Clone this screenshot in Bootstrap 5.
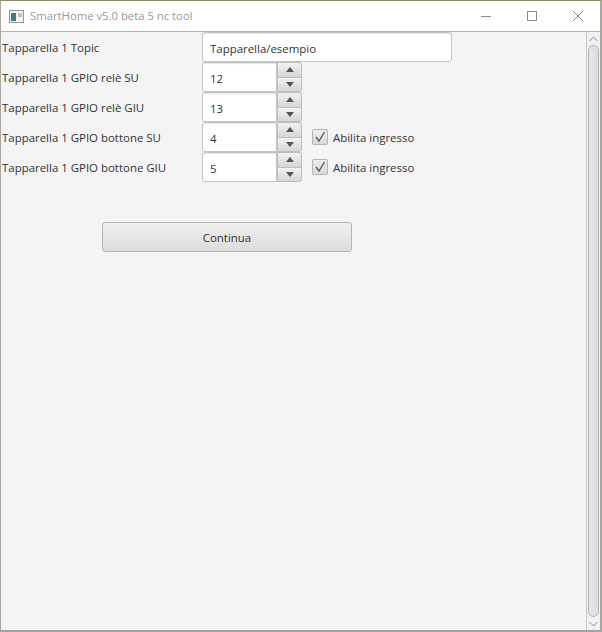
<!DOCTYPE html>
<html lang="it">
<head>
<meta charset="utf-8">
<title>SmartHome v5.0 beta 5 nc tool</title>
<link href="https://cdn.jsdelivr.net/npm/bootstrap@5.3.0/dist/css/bootstrap.min.css" rel="stylesheet">
<style>
html,body{height:100%;margin:0;background:#f4f4f4;}
body{font-family:"Open Sans","Noto Sans","Liberation Sans",sans-serif;font-size:11.45px;color:#333;overflow:hidden;}
.win{width:602px;height:632px;border-top:1px solid #8a8a68;border-left:1px solid #a9a9a0;border-right:2px solid #a8a8a0;border-bottom:2px solid #a3a3a3;}
.titlebar{height:31px;background:#fff;border-bottom:1px solid #b4b4b4;color:#9a9a9a;font-size:11.3px;}
.appicon{margin-left:8px;margin-right:6px;}
.winbtn{width:46px;height:30px;}
.winbtns{margin-right:-1px;}
.main{height:598px;}
.scroller{width:14px;background:#f1f1f1;border-left:1px solid #c9c9c9;}
.thumb{flex:1;margin:0 1px;border:1px solid #b4b4b4;border-radius:6px;background:linear-gradient(90deg,#e8e8e8,#dcdcdc);}
.arrowbox{height:13px;}
.formrow{height:30px;padding-left:1px;}
.lbl{width:200px;color:#333;padding-top:2px;}
.chk-text{padding-top:2px;}
.tf{height:30px;border:1px solid #c4c4c4;border-radius:3px;background:#fff;padding:2px 7px 0;font-size:11.45px;color:#333;box-shadow:inset 0 1px 1px #e4e4e4;outline:0;}
.tf-wide{width:250px;}
.spin{width:100px;height:30px;}
.spin-input{width:75px;border-radius:3px 0 0 3px;}
.spin-btns{width:25px;}
.spin-btn{flex:1;background:linear-gradient(#f2f2f2,#d6d6d6);border:1px solid #bdbdbd;}
.spin-btn:first-child{border-radius:0 3px 0 0;border-bottom:0;}
.spin-btn:last-child{border-radius:0 0 3px 0;}
.chk{width:16px;height:16px;border:1px solid #b4b4b4;border-radius:2px;background:linear-gradient(#eee,#d8d8d8);margin-left:10px;margin-right:5px;}
.go{width:250px;height:30px;margin:0 0 0 101px;border:1px solid #b4b4b4;border-radius:3px;background:linear-gradient(#f0f0f0,#dcdcdc);color:#333;font-size:11.45px;padding:2px 0 0;}
.gowrap{margin-top:40px;}
</style>
</head>
<body>
<div class="win d-flex flex-column">
  <div class="titlebar d-flex align-items-center">
    <svg class="appicon" width="15" height="15" viewBox="0 0 15 15"><rect x=".5" y="1.5" width="14" height="12" fill="#eef2f2" stroke="#8e9a9a"/><rect x="2" y="4" width="5" height="8" fill="#3d7f80"/><rect x="9" y="4" width="4" height="4" fill="#b9c4c6"/></svg>
    <span class="flex-grow-1">SmartHome v5.0 beta 5 nc tool</span>
    <div class="winbtns d-flex">
    <div class="winbtn d-flex align-items-center justify-content-center"><svg width="12" height="12" viewBox="0 0 12 12"><path d="M1 6.5H11" stroke="#8c8c8c"/></svg></div>
    <div class="winbtn d-flex align-items-center justify-content-center"><svg width="12" height="12" viewBox="0 0 12 12"><rect x="1.5" y="1.5" width="9" height="9" fill="none" stroke="#8c8c8c"/></svg></div>
    <div class="winbtn d-flex align-items-center justify-content-center"><svg width="12" height="12" viewBox="0 0 12 12"><path d="M1 1L11 11M11 1L1 11" stroke="#8c8c8c"/></svg></div>
    </div>
  </div>
  <div class="main d-flex">
    <div class="flex-grow-1">
      <div class="formrow d-flex align-items-center"><div class="lbl">Tapparella 1 Topic</div><input class="tf tf-wide" value="Tapparella/esempio"></div>
      <div class="formrow d-flex align-items-center"><div class="lbl">Tapparella 1 GPIO relè SU</div>
        <div class="spin d-flex"><input class="tf spin-input" value="12"><div class="spin-btns d-flex flex-column"><div class="spin-btn d-flex align-items-center justify-content-center"><svg width="8" height="5" viewBox="0 0 8 5"><path d="M4 0L8 5H0Z" fill="#555"/></svg></div><div class="spin-btn d-flex align-items-center justify-content-center"><svg width="8" height="5" viewBox="0 0 8 5"><path d="M0 0H8L4 5Z" fill="#555"/></svg></div></div></div></div>
      <div class="formrow d-flex align-items-center"><div class="lbl">Tapparella 1 GPIO relè GIU</div>
        <div class="spin d-flex"><input class="tf spin-input" value="13"><div class="spin-btns d-flex flex-column"><div class="spin-btn d-flex align-items-center justify-content-center"><svg width="8" height="5" viewBox="0 0 8 5"><path d="M4 0L8 5H0Z" fill="#555"/></svg></div><div class="spin-btn d-flex align-items-center justify-content-center"><svg width="8" height="5" viewBox="0 0 8 5"><path d="M0 0H8L4 5Z" fill="#555"/></svg></div></div></div></div>
      <div class="formrow d-flex align-items-center"><div class="lbl">Tapparella 1 GPIO bottone SU</div>
        <div class="spin d-flex"><input class="tf spin-input" value="4"><div class="spin-btns d-flex flex-column"><div class="spin-btn d-flex align-items-center justify-content-center"><svg width="8" height="5" viewBox="0 0 8 5"><path d="M4 0L8 5H0Z" fill="#555"/></svg></div><div class="spin-btn d-flex align-items-center justify-content-center"><svg width="8" height="5" viewBox="0 0 8 5"><path d="M0 0H8L4 5Z" fill="#555"/></svg></div></div></div>
        <div class="chk d-flex align-items-center justify-content-center"><svg width="12" height="12" viewBox="0 0 12 12"><path d="M2 6L5 10L10.500 1" fill="none" stroke="#555" stroke-width="1.300"/></svg></div><span class="chk-text">Abilita ingresso</span></div>
      <div class="formrow d-flex align-items-center"><div class="lbl">Tapparella 1 GPIO bottone GIU</div>
        <div class="spin d-flex"><input class="tf spin-input" value="5"><div class="spin-btns d-flex flex-column"><div class="spin-btn d-flex align-items-center justify-content-center"><svg width="8" height="5" viewBox="0 0 8 5"><path d="M4 0L8 5H0Z" fill="#555"/></svg></div><div class="spin-btn d-flex align-items-center justify-content-center"><svg width="8" height="5" viewBox="0 0 8 5"><path d="M0 0H8L4 5Z" fill="#555"/></svg></div></div></div>
        <div class="chk d-flex align-items-center justify-content-center"><svg width="12" height="12" viewBox="0 0 12 12"><path d="M2 6L5 10L10.500 1" fill="none" stroke="#555" stroke-width="1.300"/></svg></div><span class="chk-text">Abilita ingresso</span></div>
      <div class="gowrap"><button type="button" class="btn go d-block">Continua</button></div>
    </div>
    <div class="scroller d-flex flex-column">
      <div class="arrowbox d-flex align-items-center justify-content-center"><svg width="9" height="6" viewBox="0 0 9 6"><path d="M.5 5L4.500 1L8.500 5" fill="none" stroke="#888"/></svg></div>
      <div class="thumb"></div>
      <div class="arrowbox d-flex align-items-center justify-content-center"><svg width="9" height="6" viewBox="0 0 9 6"><path d="M.5 1L4.500 5L8.500 1" fill="none" stroke="#888"/></svg></div>
    </div>
  </div>
</div>
<script src="https://cdn.jsdelivr.net/npm/bootstrap@5.3.0/dist/js/bootstrap.bundle.min.js"></script>
</body>
</html>
